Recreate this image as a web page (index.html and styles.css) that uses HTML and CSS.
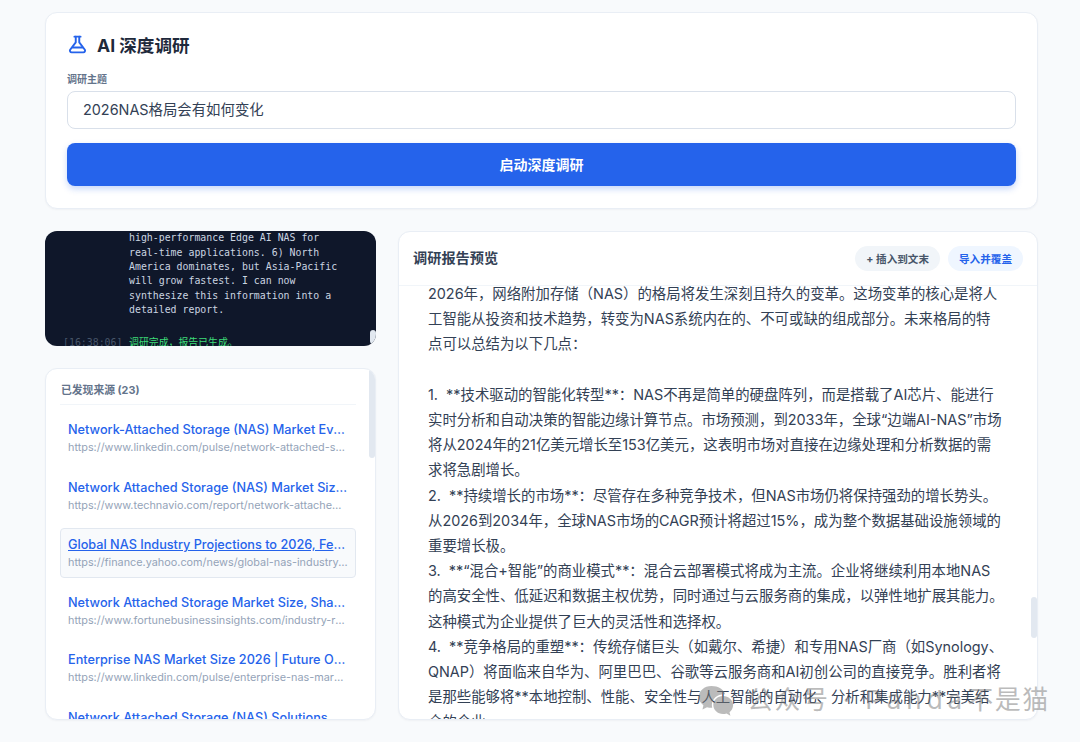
FILE: index.html
```html
<!DOCTYPE html>
<html lang="en">
<head>
    <meta charset="UTF-8">
    <meta name="viewport" content="width=device-width, initial-scale=1.0">
    <title>AI 深度调研</title>
    <link rel="stylesheet" href="styles.css">
</head>
<body>
    <div class="page">
        <section class="card research">
            <h1 class="research-title">
                <svg class="flask" viewBox="0 0 24 24" fill="none" stroke="currentColor" stroke-width="2.2" stroke-linecap="round" stroke-linejoin="round">
                    <path d="M8.500 3h7"/>
                    <path d="M10 3v6.500L3.600 18a2 2 0 0 0 1.700 3h13.400a2 2 0 0 0 1.700-3L14 9.500V3"/>
                    <path d="M6.500 15.500h11"/>
                </svg>
                AI 深度调研
            </h1>
            <label class="field-label">调研主题</label>
            <div class="topic-input">2026NAS格局会有如何变化</div>
            <button class="start-btn">启动深度调研</button>
        </section>

        <div class="columns">
            <div class="left-col">
                <div class="terminal">
                    <div class="terminal-inner">
                        <div class="log-row">
                            <span class="log-time"></span>
                            <span class="log-text">high-performance Edge AI NAS for real-time applications. 6) North America dominates, but Asia-Pacific will grow fastest. I can now synthesize this information into a detailed report.</span>
                        </div>
                        <div class="log-row log-done">
                            <span class="log-time">[16:38:06]</span>
                            <span class="log-text">调研完成，报告已生成。</span>
                        </div>
                    </div>
                    <div class="terminal-thumb"></div>
                </div>

                <div class="card sources">
                    <div class="sources-head">已发现来源 (23)</div>
                    <div class="source-list">
                        <div class="source">
                            <div class="source-title">Network-Attached Storage (NAS) Market Evolution and Outlook</div>
                            <div class="source-url">https://www.linkedin.com/pulse/network-attached-storage-nas-market</div>
                        </div>
                        <div class="source">
                            <div class="source-title">Network Attached Storage (NAS) Market Size and Forecast</div>
                            <div class="source-url">https://www.technavio.com/report/network-attached-storage-market</div>
                        </div>
                        <div class="source active">
                            <div class="source-title">Global NAS Industry Projections to 2026, Featuring Leaders</div>
                            <div class="source-url">https://finance.yahoo.com/news/global-nas-industry-projections</div>
                        </div>
                        <div class="source">
                            <div class="source-title">Network Attached Storage Market Size, Share and Growth</div>
                            <div class="source-url">https://www.fortunebusinessinsights.com/industry-reports/nas</div>
                        </div>
                        <div class="source">
                            <div class="source-title">Enterprise NAS Market Size 2026 | Future Outlook Report</div>
                            <div class="source-url">https://www.linkedin.com/pulse/enterprise-nas-market-size-2026</div>
                        </div>
                        <div class="source">
                            <div class="source-title">Network Attached Storage (NAS) Solutions</div>
                            <div class="source-url">https://www.example.com/nas-solutions</div>
                        </div>
                    </div>
                    <div class="sources-track"><div class="sources-thumb"></div></div>
                </div>
            </div>

            <div class="card report">
                <div class="report-head">
                    <h2 class="report-title">调研报告预览</h2>
                    <div class="report-actions">
                        <button class="pill pill-gray">+ 插入到文末</button>
                        <button class="pill pill-blue">导入并覆盖</button>
                    </div>
                </div>
                <div class="report-body">
                    <div class="report-text">2026年，网络附加存储（NAS）的格局将发生深刻且持久的变革。这场变革的核心是将人
工智能从投资和技术趋势，转变为NAS系统内在的、不可或缺的组成部分。未来格局的特
点可以总结为以下几点：

1.  **技术驱动的智能化转型**：NAS不再是简单的硬盘阵列，而是搭载了AI芯片、能进行
实时分析和自动决策的智能边缘计算节点。市场预测，到2033年，全球“边端AI-NAS”市场
将从2024年的21亿美元增长至153亿美元，这表明市场对直接在边缘处理和分析数据的需
求将急剧增长。
2.  **持续增长的市场**：尽管存在多种竞争技术，但NAS市场仍将保持强劲的增长势头。
从2026到2034年，全球NAS市场的CAGR预计将超过15%，成为整个数据基础设施领域的
重要增长极。
3.  **“混合+智能”的商业模式**：混合云部署模式将成为主流。企业将继续利用本地NAS
的高安全性、低延迟和数据主权优势，同时通过与云服务商的集成，以弹性地扩展其能力。
这种模式为企业提供了巨大的灵活性和选择权。
4.  **竞争格局的重塑**：传统存储巨头（如戴尔、希捷）和专用NAS厂商（如Synology、
QNAP）将面临来自华为、阿里巴巴、谷歌等云服务商和AI初创公司的直接竞争。胜利者将
是那些能够将**本地控制、性能、安全性与人工智能的自动化、分析和集成能力**完美结
合的企业。</div>
                    <div class="report-thumb"></div>
                </div>
            </div>
        </div>
    </div>

    <div class="watermark">
        <svg class="wechat" viewBox="0 0 40 34" fill="currentColor">
            <path d="M15 1C7 1 1 6.400 1 13c0 3.700 2 7 5 9.200L5 27l5-2.600c1.600.5 3.300.7 5 .7h.8a10 10 0 0 1-.4-3C15.400 15.200 21.400 10 29 10c.4 0 .8 0 1.200.1C28.600 4.800 22.400 1 15 1z"/>
            <path d="M39 22c0-5.500-5.200-10-11.200-10S17 16.500 17 22s4.800 10 10.800 10c1.300 0 2.700-.2 3.900-.6L36 34l-1-4c2.500-1.800 4-4.800 4-8z"/>
        </svg>
        <span>公众号 · <span class="watermark-name">Panda</span>不是猫</span>
    </div>
</body>
</html>
```

FILE: styles.css
```css
* {
    box-sizing: border-box;
}
body {
    margin: 0;
    height: 100vh;
    overflow: hidden;
    background-color: #f8fafc;
    color: #334155;
    font-family: Inter, "Noto Sans CJK SC", sans-serif;
}
button {
    font-family: inherit;
    border: none;
    cursor: pointer;
}
.page {
    display: flex;
    flex-direction: column;
    gap: 22px;
    height: 100%;
    padding: 12px 42px 22px 45px;
}
.card {
    background-color: #fff;
    border: 1px solid #e9eef5;
    border-radius: 12px;
    box-shadow: 0 1px 2px rgba(15, 23, 42, 0.04);
}

/* top form */
.research {
    display: flex;
    flex-direction: column;
    height: 197px;
    padding: 19px 21px 0;
}
.research-title {
    display: flex;
    align-items: center;
    gap: 9px;
    height: 24px;
    margin: 0;
    font-size: 17.6px;
    font-weight: 700;
    color: #1e293b;
}
.flask {
    width: 21px;
    height: 21px;
    color: #2563eb;
}
.field-label {
    margin-top: 16px;
    font-size: 10px;
    line-height: 14px;
    font-weight: 700;
    color: #64748b;
}
.topic-input {
    height: 38px;
    margin-top: 5px;
    padding: 0 15px;
    border: 1px solid #d9e0ea;
    border-radius: 8px;
    font-size: 14.4px;
    line-height: 36px;
    color: #334155;
}
.start-btn {
    height: 43px;
    margin-top: 14px;
    padding: 0 0 2px;
    border-radius: 8px;
    background-color: #2563eb;
    color: #fff;
    font-size: 14px;
    font-weight: 700;
    box-shadow: 0 3px 6px rgba(37, 99, 235, 0.25);
}

.columns {
    display: grid;
    grid-template-columns: 331px 1fr;
    gap: 22px;
    flex: 1;
    min-height: 0;
}
.left-col {
    display: flex;
    flex-direction: column;
    gap: 22px;
    min-height: 0;
}

/* log panel */
.terminal {
    position: relative;
    display: flex;
    flex-direction: column;
    justify-content: flex-end;
    flex: none;
    height: 115px;
    overflow: hidden;
    padding: 0 18px;
    background-color: #0f172a;
    border-radius: 12px;
    font-family: "DejaVu Sans Mono", "Noto Sans CJK SC", monospace;
    font-size: 9.9px;
    line-height: 14.4px;
}
.terminal-inner {
    flex: none;
    margin-bottom: -4px;
}
.log-row {
    display: flex;
    gap: 6px;
    margin-bottom: 18px;
    color: #cbd5e1;
}
.log-row:last-child {
    margin-bottom: 0;
}
.log-time {
    flex: none;
    width: 60px;
    color: #475569;
}
.log-text {
    width: 215px;
}
.log-done .log-text {
    color: #3ddc78;
}
.terminal-thumb {
    position: absolute;
    right: 0;
    bottom: 2px;
    width: 6px;
    height: 14px;
    border-radius: 3px;
    background-color: #e2e8f0;
}

/* sources */
.sources {
    position: relative;
    flex: 1;
    min-height: 0;
    overflow: hidden;
    padding: 0 19px 0 14px;
}
.sources-head {
    height: 36px;
    padding: 14px 0 0 1px;
    border-bottom: 1px solid #f1f5f9;
    font-size: 10.8px;
    line-height: 16px;
    font-weight: 700;
    color: #64748b;
}
.source-list {
    display: flex;
    flex-direction: column;
    gap: 8px;
    padding-top: 8px;
}
.source {
    flex: none;
    height: 49.6px;
    padding: 7px 7px;
    border: 1px solid transparent;
    border-radius: 4px;
}
.source.active {
    background-color: #f8fafc;
    border-color: #e2e8f0;
}
.source-title {
    overflow: hidden;
    white-space: nowrap;
    text-overflow: ellipsis;
    font-size: 12.7px;
    line-height: 18px;
    font-weight: 500;
    color: #2563eb;
}
.active .source-title {
    text-decoration: underline;
}
.source-url {
    overflow: hidden;
    white-space: nowrap;
    text-overflow: ellipsis;
    font-size: 10.85px;
    line-height: 16px;
    color: #94a3b8;
}
.sources-track {
    position: absolute;
    top: 0;
    right: 0;
    bottom: 0;
    width: 6px;
}
.sources-thumb {
    height: 89px;
    background-color: #e2e8f0;
    border-radius: 3px;
}

/* report */
.report {
    display: flex;
    flex-direction: column;
    min-height: 0;
    overflow: hidden;
}
.report-head {
    display: flex;
    flex: none;
    justify-content: space-between;
    align-items: center;
    height: 54px;
    padding: 0 14px 1px 14px;
    border-bottom: 1px solid #f1f5f9;
}
.report-title {
    margin: 0 0 2px;
    font-size: 14.2px;
    font-weight: 700;
    color: #334155;
}
.report-actions {
    display: flex;
    gap: 8px;
}
.pill {
    height: 25px;
    padding: 0 11px;
    border-radius: 13px;
    font-size: 10.6px;
    font-weight: 700;
}
.pill-gray {
    background-color: #f1f5f9;
    color: #475569;
}
.pill-blue {
    background-color: #eff6ff;
    color: #2563eb;
}
.report-body {
    position: relative;
    flex: 1;
    min-height: 0;
    overflow: hidden;
}
.report-text {
    margin-top: -5px;
    padding-left: 29px;
    white-space: pre;
    font-size: 14.4px;
    line-height: 25.2px;
    color: #334155;
}
.report-thumb {
    position: absolute;
    top: 311px;
    right: 0;
    width: 6px;
    height: 41px;
    border-radius: 3px;
    background-color: #e2e8f0;
}

/* watermark lies over the report corner */
.watermark {
    position: absolute;
    top: 680px;
    left: 698px;
    display: flex;
    align-items: center;
    gap: 13px;
    font-size: 26px;
    letter-spacing: 1.5px;
    word-spacing: 4.5px;
    line-height: 40px;
    white-space: nowrap;
    color: rgba(120, 120, 120, 0.5);
}
.watermark-name {
    letter-spacing: 5px;
}
.wechat {
    width: 36px;
    height: 31px;
}
```
